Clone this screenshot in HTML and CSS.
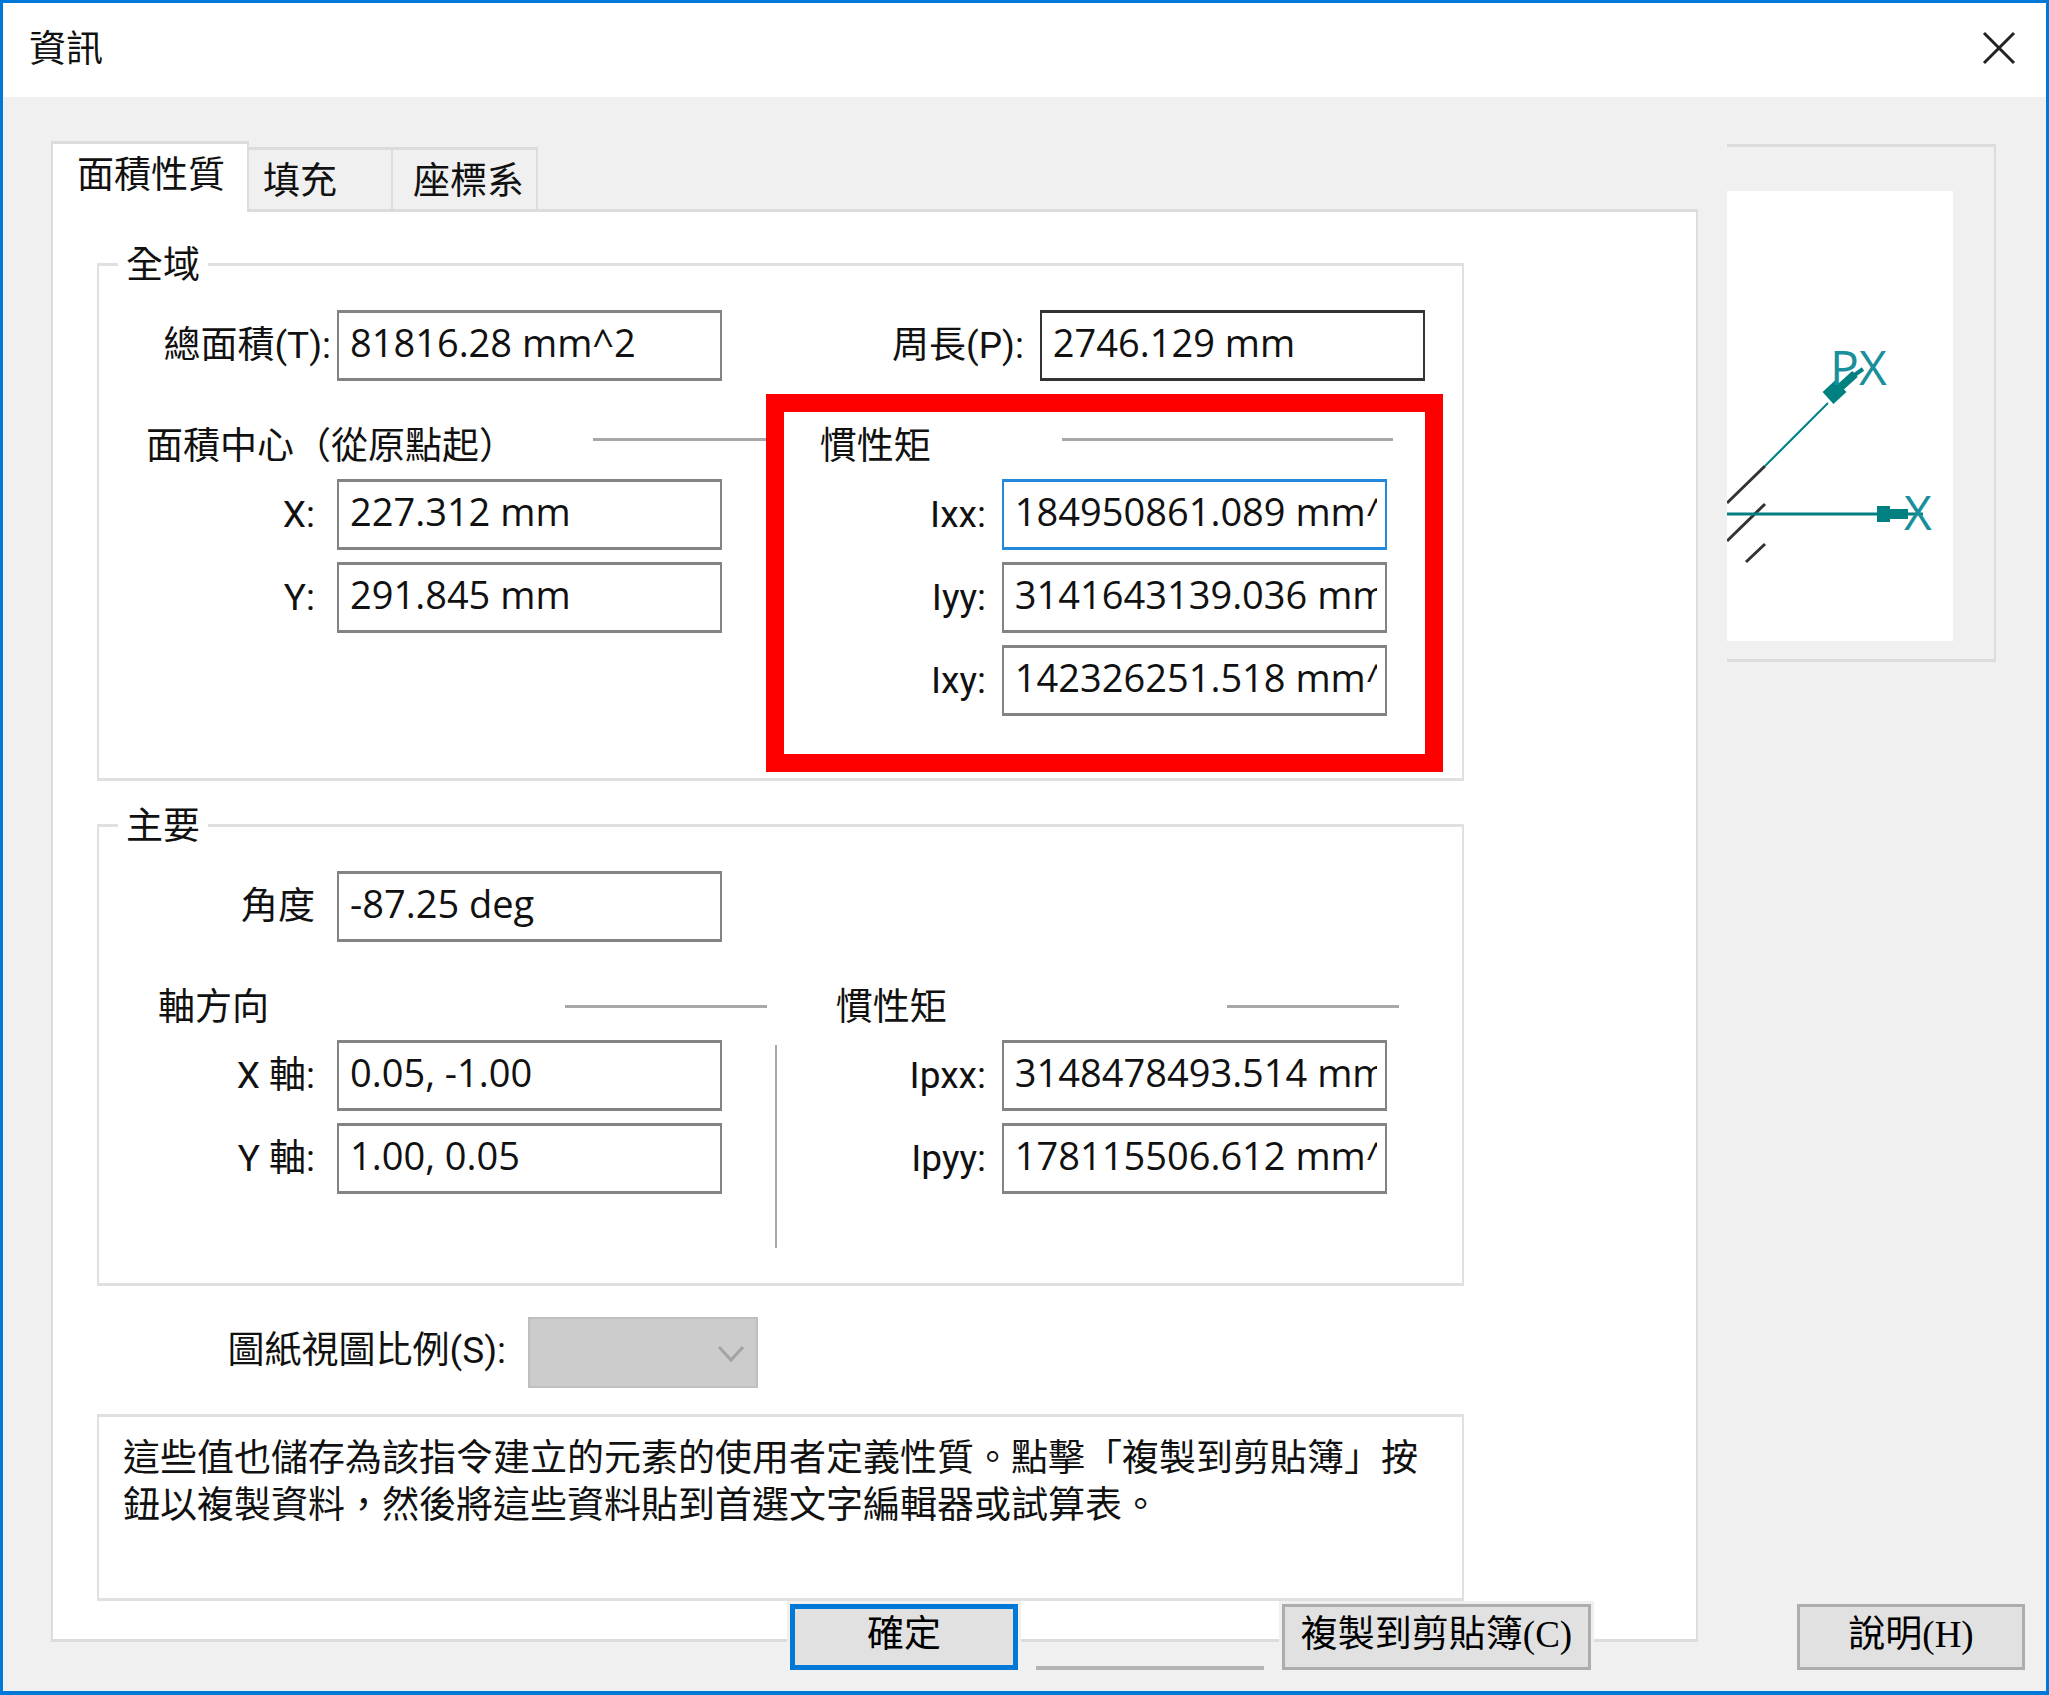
FILE: index.html
```html
<!DOCTYPE html>
<html lang="zh-Hant">
<head>
    <meta charset="UTF-8">
    <meta name="viewport" content="width=device-width, initial-scale=1.0">
    <title>資訊</title>
    <link rel="stylesheet" href="styles.css">
</head>
<body>
    <form class="window">
        <header class="titlebar">
            <h1 class="title">資訊</h1>
            <button type="button" class="close" aria-label="關閉">
                <svg width="34" height="34" viewBox="0 0 34 34"><path d="M2 2L32 32M32 2L2 32" stroke="#222" stroke-width="3" fill="none"/></svg>
            </button>
        </header>

        <div class="content">
            <div class="main">
                <div class="tabs" role="tablist">
                    <button type="button" role="tab" class="tab active" aria-selected="true">面積性質</button>
                    <button type="button" role="tab" class="tab">填充</button>
                    <button type="button" role="tab" class="tab">座標系</button>
                </div>
                <div class="panel" role="tabpanel">
                    <fieldset class="group global">
                        <legend>全域</legend>
                        <div class="columns">
                            <div class="row near">
                                <label for="area">總面積(T):</label>
                                <input id="area" type="text" value="81816.28 mm^2">
                            </div>
                            <div class="row perimeter">
                                <label for="perimeter">周長(P):</label>
                                <input id="perimeter" class="dark" type="text" value="2746.129 mm">
                            </div>
                        </div>
                        <div class="columns">
                            <section class="column">
                                <div class="subhead center"><h2>面積中心（從原點起）</h2><span class="rule"></span></div>
                                <div class="row"><label for="cx">X:</label><input id="cx" type="text" value="227.312 mm"></div>
                                <div class="row"><label for="cy">Y:</label><input id="cy" type="text" value="291.845 mm"></div>
                            </section>
                            <section class="column highlight">
                                <div class="subhead inertia"><h2>慣性矩</h2><span class="rule"></span></div>
                                <div class="row"><label for="ixx">Ixx:</label><input id="ixx" class="focused" type="text" value="184950861.089 mm^4"></div>
                                <div class="row"><label for="iyy">Iyy:</label><input id="iyy" type="text" value="3141643139.036 mm^4"></div>
                                <div class="row"><label for="ixy">Ixy:</label><input id="ixy" type="text" value="142326251.518 mm^4"></div>
                            </section>
                        </div>
                    </fieldset>

                    <fieldset class="group principal">
                        <legend>主要</legend>
                        <div class="row">
                            <label for="angle">角度</label>
                            <input id="angle" type="text" value="-87.25 deg">
                        </div>
                        <div class="columns">
                            <section class="column">
                                <div class="subhead axis"><h2>軸方向</h2><span class="rule"></span></div>
                                <div class="row"><label for="ax">X 軸:</label><input id="ax" type="text" value="0.05, -1.00"></div>
                                <div class="row"><label for="ay">Y 軸:</label><input id="ay" type="text" value="1.00, 0.05"></div>
                            </section>
                            <section class="column divided">
                                <div class="subhead moment"><h2>慣性矩</h2><span class="rule"></span></div>
                                <div class="row"><label for="ipxx">Ipxx:</label><input id="ipxx" type="text" value="3148478493.514 mm^4"></div>
                                <div class="row"><label for="ipyy">Ipyy:</label><input id="ipyy" type="text" value="178115506.612 mm^4"></div>
                            </section>
                        </div>
                    </fieldset>

                    <div class="scale">
                        <label for="scale">圖紙視圖比例(S):</label>
                        <div class="dropdown">
                            <select id="scale" disabled><option></option></select>
                            <svg class="chevron" width="28" height="18" viewBox="0 0 28 18"><path d="M2 2L14 15L26 2" stroke="#a3a3a3" stroke-width="3" fill="none"/></svg>
                        </div>
                    </div>

                    <p class="note">這些值也儲存為該指令建立的元素的使用者定義性質。點擊「複製到剪貼簿」按鈕以複製資料，然後將這些資料貼到首選文字編輯器或試算表。</p>
                </div>
            </div>

            <aside class="preview">
                <svg class="axes" width="226" height="450" viewBox="0 0 226 450">
                    <rect width="226" height="450" fill="#fff"/>
                    <g stroke="#333" stroke-width="3">
                        <path d="M0 312L38 275M0 350L38 313M19 371L38 353"/>
                    </g>
                    <g stroke="#008080">
                        <path d="M38 275L101 212" stroke-width="2"/>
                        <path d="M0 323H196" stroke-width="3"/>
                        <path d="M101 207L114 195" stroke-width="16"/>
                        <path d="M108 201L128 183" stroke-width="8"/>
                        <path d="M126 185L136 178" stroke-width="4"/>
                        <path d="M150 323H163" stroke-width="16"/>
                        <path d="M162 323H181" stroke-width="10"/>
                    </g>
                    <text x="103" y="194">PX</text>
                    <text x="177" y="339">X</text>
                </svg>
            </aside>
        </div>

        <footer class="buttons">
            <button type="submit" class="button default">確定</button>
            <span class="line"></span>
            <button type="button" class="button copy">複製到剪貼簿(C)</button>
            <button type="button" class="button help">說明(H)</button>
        </footer>
    </form>
</body>
</html>
```
FILE: styles.css
```css
* {
    box-sizing: border-box;
}
body {
    margin: 0;
    background-color: #f0f0f0;
    color: #111;
    font-family: "Open Sans", "Noto Sans CJK TC", sans-serif;
    font-size: 37px;
    line-height: 44px;
}
h1, h2, p {
    margin: 0;
    font-size: 37px;
    font-weight: normal;
}
button, input, select {
    font: inherit;
    color: inherit;
    border-radius: 0;
}
label {
    font-family: Roboto, "Noto Sans CJK TC", sans-serif;
}
.window {
    min-height: 100vh;
    border: 3px solid #0078d7;
    border-bottom-width: 4px;
}
.titlebar {
    display: flex;
    justify-content: space-between;
    align-items: center;
    height: 94px;
    padding: 0 30px 4px 26px;
    background-color: #fff;
}
.close {
    display: flex;
    padding: 0;
    border: none;
    background: none;
}
.content {
    display: flex;
    align-items: flex-start;
    gap: 29px;
    padding: 44px 50px 0 48px;
}
.main {
    flex: 1;
}

/* tabs */
.tabs {
    display: flex;
    align-items: flex-end;
}
.tab {
    height: 62px;
    min-width: 144px;
    padding: 0 14px;
    border: 2px solid #dcdcdc;
    border-top-width: 3px;
    border-left: none;
    border-bottom: none;
    background-color: #f0f0f0;
    text-align: left;
}
.tab:last-child {
    padding: 0 12px 0 20px;
}
.tab.active {
    position: relative;
    height: 71px;
    margin-bottom: -3px;
    padding: 0 22px 8px 24px;
    border-left: 2px solid #dcdcdc;
    background-color: #fff;
}
.panel {
    padding: 30px 232px 38px 44px;
    border: 2px solid #dcdcdc;
    border-width: 3px 2px;
    background-color: #fff;
}

/* group boxes */
.group {
    min-width: 0;
    margin: 0;
    padding: 24px 0 62px;
    border: 2px solid #e0e0e0;
    border-width: 3px 2px;
}
.group legend {
    height: 44px;
    margin-left: 19px;
    padding: 0 8px;
}
.principal {
    margin-top: 22px;
    padding: 24px 0 89px;
}
.columns {
    display: grid;
    grid-template-columns: 49fr 51fr;
}
.column {
    display: flex;
    flex-direction: column;
    gap: 12px;
}
.row {
    display: flex;
    align-items: center;
}
.row label {
    width: 238px;
    padding-right: 22px;
    text-align: right;
}
.near label {
    padding-right: 6px;
}
.perimeter label {
    width: 273px;
    padding-right: 16px;
}
.highlight .row label,
.divided .row label {
    width: 235px;
    padding-right: 16px;
}
.row input {
    width: 385px;
    height: 71px;
    padding: 0 8px 7px 11px;
    border: 2px solid #838383;
    border-width: 3px 2px;
    background-color: #fff;
    font-size: 38px;
    outline: none;
}
.row input.dark {
    border-color: #333;
}
.row input.focused {
    border-color: #2488db;
}
.subhead {
    display: flex;
    align-items: center;
    justify-content: space-between;
    height: 44px;
    margin-top: 42px;
}
.rule {
    height: 3px;
    margin-bottom: 12px;
    background-color: #a8a8a8;
}
.principal .rule {
    margin-bottom: 0;
}
.center {
    padding-left: 47px;
}
.center .rule {
    width: 174px;
}
.inertia {
    padding: 0 69px 0 53px;
}
.inertia .rule {
    width: 331px;
}
.axis {
    padding-left: 59px;
}
.axis .rule {
    width: 202px;
}
.moment {
    padding: 0 63px 0 69px;
}
.moment .rule {
    width: 172px;
}

/* red frame around the moments of inertia */
.highlight {
    position: relative;
}
.highlight::after {
    content: '';
    position: absolute;
    inset: 13px 19px -56px -1px;
    border: 18px solid #f00;
    pointer-events: none;
}
.divided {
    position: relative;
}
.divided::before {
    content: '';
    position: absolute;
    top: 103px;
    left: 8px;
    bottom: -54px;
    width: 2px;
    background-color: #a8a8a8;
}

/* drawing view scale */
.scale {
    display: flex;
    align-items: center;
    margin-top: 31px;
}
.scale label {
    width: 431px;
    padding: 0 22px 4px 0;
    text-align: right;
}
.dropdown {
    position: relative;
}
.dropdown select {
    display: block;
    width: 230px;
    height: 71px;
    border: 2px solid #bfbfbf;
    background-color: #ccc;
    appearance: none;
    opacity: 1;
}
.chevron {
    position: absolute;
    right: 13px;
    top: 28px;
}
.note {
    min-height: 187px;
    margin-top: 26px;
    padding: 16px 22px 16px 24px;
    border: 2px solid #e0e0e0;
    border-width: 3px 2px;
    line-height: 47px;
}

/* axes preview */
.preview {
    width: 269px;
    margin-top: 3px;
    padding: 44px 0 18px;
    border: 2px solid #dcdcdc;
    border-width: 3px 2px 3px 0;
}
.axes {
    display: block;
}
.axes text {
    font-family: "Open Sans", sans-serif;
    font-size: 48px;
    fill: #1a8f9c;
}

/* the button bar sits over the lower edge of the panel */
.buttons {
    position: relative;
    display: flex;
    justify-content: flex-end;
    gap: 18px;
    margin-top: -38px;
    padding: 0 21px 16px;
}
.button {
    width: 228px;
    height: 66px;
    padding: 0 0 4px;
    border: 3px solid #adadad;
    background-color: #e1e1e1;
    color: #000;
    font-family: "Liberation Serif", "Noto Sans CJK TC", serif;
    white-space: nowrap;
    box-shadow: 0 0 0 3px #f0f0f0;
}
.button.default {
    border: 5px solid #0078d7;
}
.button.copy {
    width: 309px;
}
.button.help {
    margin-left: 188px;
}
.line {
    align-self: flex-end;
    width: 228px;
    height: 4px;
    background-color: #b4b4b4;
}
```
